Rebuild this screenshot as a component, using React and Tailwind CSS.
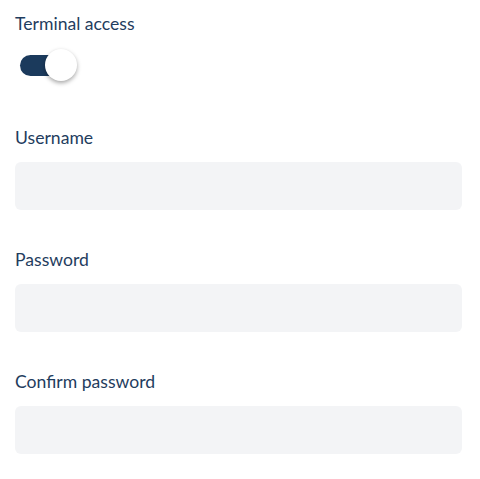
const Field = ({ label, type }) => (
  <div className="flex flex-col">
    <label className="text-[17.6px] leading-6 text-[#1f3d5e]">{label}</label>
    <input
      type={type}
      className="mt-[12px] h-[48px] w-full rounded-md bg-[#f3f4f6] px-3 outline-none"
    />
  </div>
);

export default function App() {
  return (
    <div className="min-h-screen bg-white pl-[15px] pr-[18px] pt-[12px] font-['Lato','Noto_Sans',sans-serif]">
      <div className="flex flex-col">
        <span className="text-[17.6px] leading-6 text-[#1f3d5e]">Terminal access</span>
        <div className="mt-[13px] ml-[5px] flex h-[32px] items-center">
          <div className="relative h-[21px] w-[42px] rounded-full bg-[#1b3a5c]">
            <div className="absolute left-[25px] top-[-6px] h-[32px] w-[32px] rounded-full bg-white shadow-[0_2px_4px_rgba(0,0,0,0.35)]" />
          </div>
        </div>
      </div>
      <div className="mt-[45px] flex flex-col gap-[38px]">
        <Field label="Username" type="text" />
        <Field label="Password" type="password" />
        <Field label="Confirm password" type="password" />
      </div>
    </div>
  );
}
